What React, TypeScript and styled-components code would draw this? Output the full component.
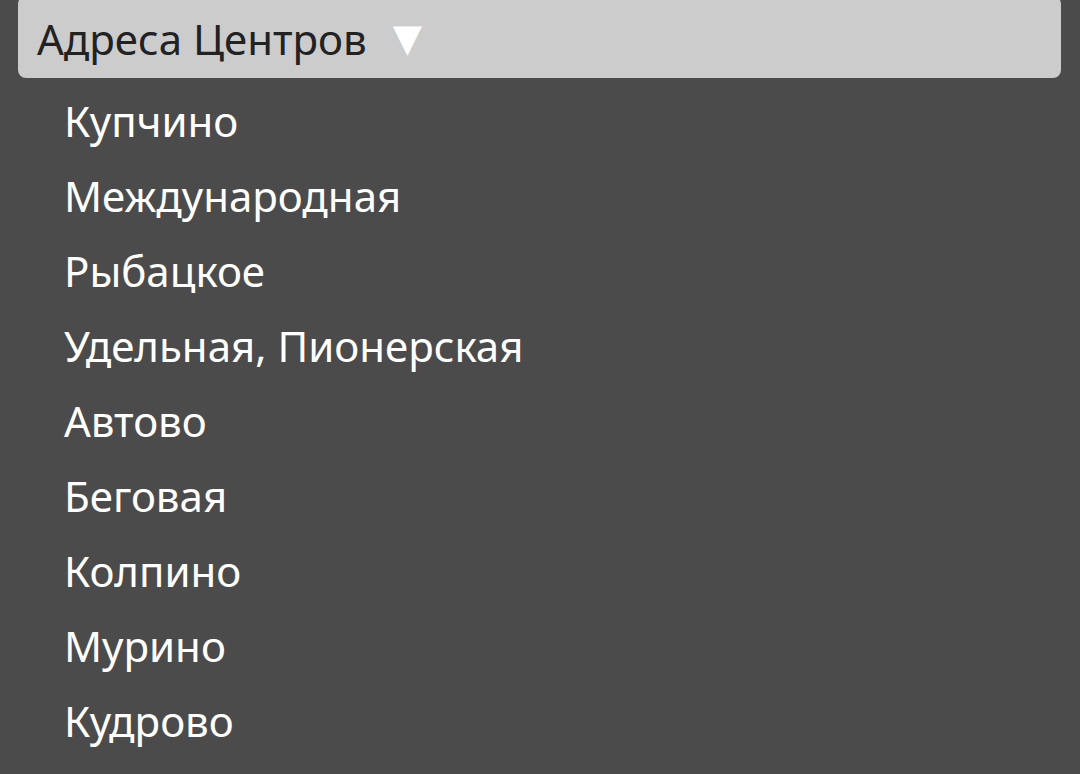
import styled, { createGlobalStyle } from 'styled-components';

const GlobalStyle = createGlobalStyle`
  html, body {
    margin: 0;
    padding: 0;
    background: #4b4b4b;
    overflow: hidden;
  }
`;

const centers = [
  'Купчино',
  'Международная',
  'Рыбацкое',
  'Удельная, Пионерская',
  'Автово',
  'Беговая',
  'Колпино',
  'Мурино',
  'Кудрово',
];

const Page = styled.div`
  width: 1080px;
  height: 774px;
  padding: 0 19px 0 18px;
  box-sizing: border-box;
  font-family: 'Noto Sans', 'Open Sans', sans-serif;
`;

// серая плашка с заголовком
const DropdownHeader = styled.div`
  display: flex;
  align-items: center;
  gap: 26px;
  height: 82px;
  margin-top: -4px;
  padding: 2px 0 0 19px;
  box-sizing: border-box;
  background: #cccccc;
  border-radius: 8px;
  color: #222222;
  font-size: 42px;
`;

const Arrow = styled.span`
  color: #ffffff;
  font-size: 38px;
  font-family: 'DejaVu Sans', sans-serif;
`;

const List = styled.ul`
  list-style: none;
  margin: 0;
  padding: 5px 0 0 46px;
`;

const Item = styled.li`
  height: 75px;
  display: flex;
  align-items: center;
  color: #ffffff;
  font-size: 42px;
`;

const App = () => {
  return (
    <>
      <GlobalStyle />
      <Page>
        <DropdownHeader>
          Адреса Центров
          <Arrow>▼</Arrow>
        </DropdownHeader>
        <List>
          {centers.map((name) => (
            <Item key={name}>{name}</Item>
          ))}
        </List>
      </Page>
    </>
  );
};

export default App;
